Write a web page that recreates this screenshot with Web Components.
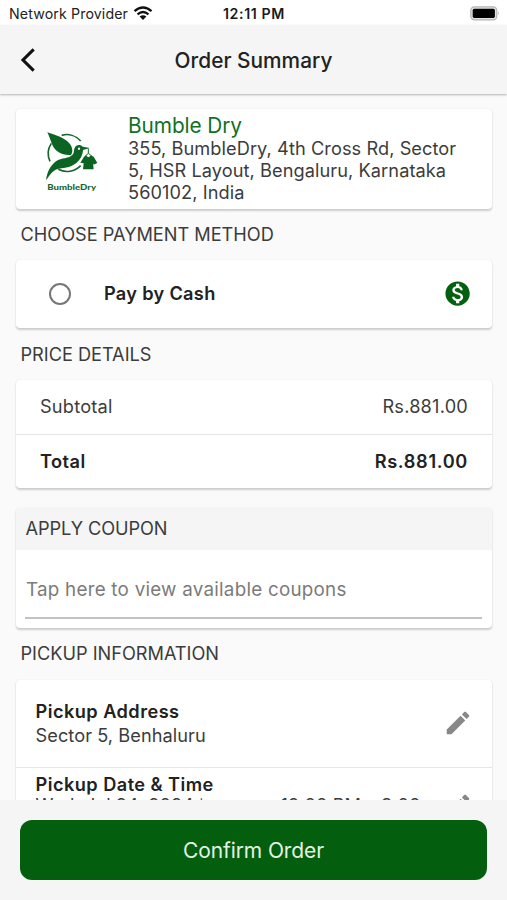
<!DOCTYPE html>
<html lang="en"><head><meta charset="utf-8"><title>Order Summary</title>
<style>
html,body{margin:0;height:100%;overflow:hidden}
body{font-family:Inter,"Liberation Sans",sans-serif;background:#fafafa;color:#3c3c3c}
</style></head><body>
<order-page></order-page>
<script>
const define=(name,html)=>customElements.define(name,class extends HTMLElement{
  constructor(){super();this.attachShadow({mode:'open'}).innerHTML=html;}
});

define('status-bar',`<style>
:host{display:grid;grid-template-columns:1fr auto 1fr;align-items:center;height:25px;padding:2px 8px 0 9px;box-sizing:border-box;background:#fff;color:#222;font-size:14.2px;line-height:24px}
.l{display:flex;align-items:center;gap:5px;letter-spacing:.12px;white-space:nowrap}
.l svg{margin-top:-2px}
.t{font-weight:600;letter-spacing:.6px;color:#1a1a1a}
.r{display:flex;justify-content:flex-end;margin:-1px -1px 0 0}
svg{display:block}
</style>
<div class="l"><span>Network Provider</span><svg width="20" height="14" viewBox="0 0 20 14" fill="none" stroke="#111" stroke-width="2.3"><path d="M1.5 5.1Q10-2.2 18.5 5.1M4.5 8.3Q10 3.7 15.5 8.3"/><path d="M6.6 10.6Q10 7.7 13.4 10.6L10 13.9Z" fill="#111" stroke="none"/></svg></div>
<div class="t">12:11 PM</div>
<div class="r"><svg width="30" height="15" viewBox="0 0 30 15"><rect x=".8" y=".8" width="26" height="13" rx="3.6" fill="#e2e2e2" stroke="#b4b4b4" stroke-width="1.2"/><rect x="2.7" y="2.7" width="22.2" height="9.2" rx="1.6" fill="#000"/><path d="M28.2 5q1.8 2.3 0 4.6z" fill="#aaa"/></svg></div>`);

define('app-bar',`<style>
:host{display:grid;grid-template-columns:56px 1fr 56px;align-items:center;height:69px;background:#f5f5f5;box-shadow:0 1px 2px rgba(0,0,0,.28);position:relative}
svg{display:block;margin-left:20px}
h1{margin:0;padding-top:2px;text-align:center;font-size:20.8px;font-weight:500;line-height:28px;color:#222;letter-spacing:.04px}
</style><svg width="17" height="26" viewBox="0 0 17 26"><path d="M13.7 2.4 3 13l10.7 10.6" fill="none" stroke="#111" stroke-width="3.1"/></svg><h1><slot></slot></h1>`);

define('section-title',`<style>
:host{display:block;padding-left:20.5px;height:51.5px;line-height:var(--line,51px);font-size:18.2px;letter-spacing:-.02px;color:#3c3c3c}
</style><slot></slot>`);

define('info-card',`<style>
:host{display:block;margin:0 15px 0 16px;background:#fff;border-radius:4px;box-shadow:0 1.5px 2px rgba(0,0,0,.18),0 0 1.5px rgba(0,0,0,.06);box-sizing:border-box}
</style><slot></slot>`);

define('brand-logo',`<style>:host{display:block;width:70px;height:80px}svg{display:block}</style>
<svg width="70" height="80" viewBox="0 0 210 240">
<g fill="none" stroke="#17662b" stroke-width="5"><path d="M77 46A56 56 0 0 1 134 63M46 70A56 56 0 0 0 42 124M67 148A56 56 0 0 0 134 137"/></g>
<g fill="#0c6422">
<path d="M34 37C55 45 91 53 104 75C112 89 109 99 105 105C91 106 73 103 60 91C47 79 44 57 34 37Z"/>
<path d="M30 181C33 157 43 137 60 124C76 112 99 118 111 103C115 98 113 88 117 82C122 74 133 73 140 80L162 84L141 90C140 104 135 117 122 128C108 140 89 143 69 146C52 149 43 162 30 181Z"/></g>
<path d="M144 110L150 106Q157 117 165 106L173 110L184 129L173 134L171 129L173 148H141L143 130L133 128Z" fill="#0c6422" stroke="#fff" stroke-width="3" paint-order="stroke"/>
<circle cx="129" cy="86" r="3.5" fill="#fff"/>
<path d="M148 108L157 100L167 108M157 100V86" fill="none" stroke="#17662b" stroke-width="3"/>
<text x="34" y="209" textLength="146" lengthAdjust="spacingAndGlyphs" font-family="Lato" font-weight="900" font-size="22" fill="#17662b">BumbleDry</text>
</svg>`);

define('shop-card',`<style>
:host{display:flex;height:99.5px;padding:0 20px;box-sizing:border-box}
brand-logo{margin-top:11px}
.d{margin-left:22px;padding-top:5px;font-size:18.2px;line-height:22px;white-space:nowrap;letter-spacing:.07px}
.n{font-size:20.8px;line-height:24px;margin-bottom:-1px;color:#12701f;letter-spacing:-.08px}
</style><brand-logo></brand-logo><div class="d"><div class="n"><slot name="name"></slot></div><slot></slot></div>`);

define('pay-option',`<style>
:host{display:flex;align-items:center;height:68px;padding:0 19.5px 0 32.5px}
i{width:18px;height:18px;border:2.3px solid #777;border-radius:50%}
b{flex:1;margin:-2px 0 0 33.5px;font-size:18.2px;font-weight:600;letter-spacing:.3px;color:#222}
svg{display:block}
</style><i></i><b><slot></slot></b><svg width="29.2" height="29.2" viewBox="0 0 24 24"><path fill="#046010" d="M12 2C6.48 2 2 6.48 2 12s4.48 10 10 10 10-4.48 10-10S17.52 2 12 2zm1.41 16.09V20h-2.67v-1.93c-1.71-.36-3.16-1.46-3.27-3.4h1.96c.1 1.05.82 1.87 2.65 1.87 1.96 0 2.4-.98 2.4-1.59 0-.83-.44-1.61-2.67-2.14-2.48-.6-4.18-1.62-4.18-3.67 0-1.72 1.39-2.84 3.11-3.21V4h2.67v1.95c1.86.45 2.79 1.86 2.85 3.39H14.3c-.05-1.11-.64-1.87-2.22-1.87-1.5 0-2.4.68-2.4 1.64 0 .84.65 1.39 2.67 1.91s4.18 1.39 4.18 3.91c-.01 1.83-1.38 2.83-3.12 3.16z"/></svg>`);

define('price-row',`<style>
:host{display:flex;justify-content:space-between;align-items:center;height:52px;padding:0 24px 2px;font-size:18.2px;letter-spacing:.2px}
:host([total]){font-weight:600;letter-spacing:.65px;border-top:1px solid #e4e4e4;height:53.5px;padding-bottom:0;color:#222}
:host([total]) span{letter-spacing:.45px}
</style><span><slot></slot></span><slot name="amount"></slot>`);

define('coupon-box',`<style>
:host{display:block}
header{height:41.5px;line-height:41px;padding-left:9.5px;background:#f5f5f5;font-size:18.2px;letter-spacing:-.08px;border-radius:4px 4px 0 0}
.f{margin:0 10px 0 9px;height:67.5px;line-height:80px;border-bottom:2px solid #c2c2c2;font-size:18.8px;letter-spacing:.25px;color:#7b7b7b;padding-left:1px;box-sizing:content-box}
.e{height:8.5px}
</style><header><slot name="title"></slot></header><div class="f"><slot></slot></div><div class="e"></div>`);

define('pickup-row',`<style>
:host{display:flex;align-items:center;justify-content:space-between;height:86.5px;padding:0 19.5px;border-bottom:1px solid #e6e6e6;font-size:18.2px;line-height:24.5px;letter-spacing:.06px}
:host([second]){height:72px;align-items:flex-start;line-height:21px}
:host([second]) .x{padding-top:6px}
:host([second]) svg{margin-top:23.5px}
b{display:block;font-weight:600;letter-spacing:.45px;color:#222}
svg{display:block;flex:none}
.x{white-space:nowrap}
</style><div class="x"><b><slot name="title"></slot></b><slot></slot></div><svg width="30" height="30" viewBox="0 0 24 24" fill="#888"><path d="M3 17.25V21h3.75L17.81 9.94l-3.75-3.75L3 17.25zM20.71 7.04c.39-.39.39-1.02 0-1.41l-2.34-2.34c-.39-.39-1.02-.39-1.41 0l-1.83 1.83 3.75 3.75 1.83-1.83z"/></svg>`);

define('confirm-bar',`<style>
:host{display:flex;height:100px;box-sizing:border-box;padding:19.5px 20px 20px 20px;background:#f5f5f5;position:relative}
button{flex:1;border:0;border-radius:12px;background:#035f0d;color:#e2f3e2;font:400 21px Inter,sans-serif;letter-spacing:-.1px;padding:1px 0 0}
</style><button><slot></slot></button>`);

define('order-page',`<style>
:host{display:flex;flex-direction:column;height:900px;background:#fafafa}
main{flex:1;min-height:0;overflow:hidden;padding-top:15px}
.time{margin-left:77px}
.end{margin-left:20px}
.bar{font-size:14px;line-height:1}
</style>
<status-bar></status-bar><app-bar>Order Summary</app-bar>
<main>
<info-card><shop-card><span slot="name">Bumble Dry</span>355, BumbleDry, 4th Cross Rd, Sector<br>5, HSR Layout, Bengaluru, Karnataka<br>560102, India</shop-card></info-card>
<section-title style="--line:50px">CHOOSE PAYMENT METHOD</section-title>
<info-card><pay-option>Pay by Cash</pay-option></info-card>
<section-title style="--line:52px">PRICE DETAILS</section-title>
<info-card><price-row>Subtotal<span slot="amount">Rs.881.00</span></price-row><price-row total>Total<span slot="amount">Rs.881.00</span></price-row></info-card>
<info-card style="margin-top:20px"><coupon-box><span slot="title">APPLY COUPON</span>Tap here to view available coupons</coupon-box></info-card>
<section-title style="height:52.5px">PICKUP INFORMATION</section-title>
<info-card><pickup-row><span slot="title">Pickup Address</span>Sector 5, Benhaluru</pickup-row><pickup-row second><span slot="title">Pickup Date &amp; Time</span>Wed, Jul 24, 2024 <span class="bar">|</span><span class="time">12:00 PM</span><span class="end">3:00</span></pickup-row></info-card>
</main>
<confirm-bar>Confirm Order</confirm-bar>`);
</script></body></html>
